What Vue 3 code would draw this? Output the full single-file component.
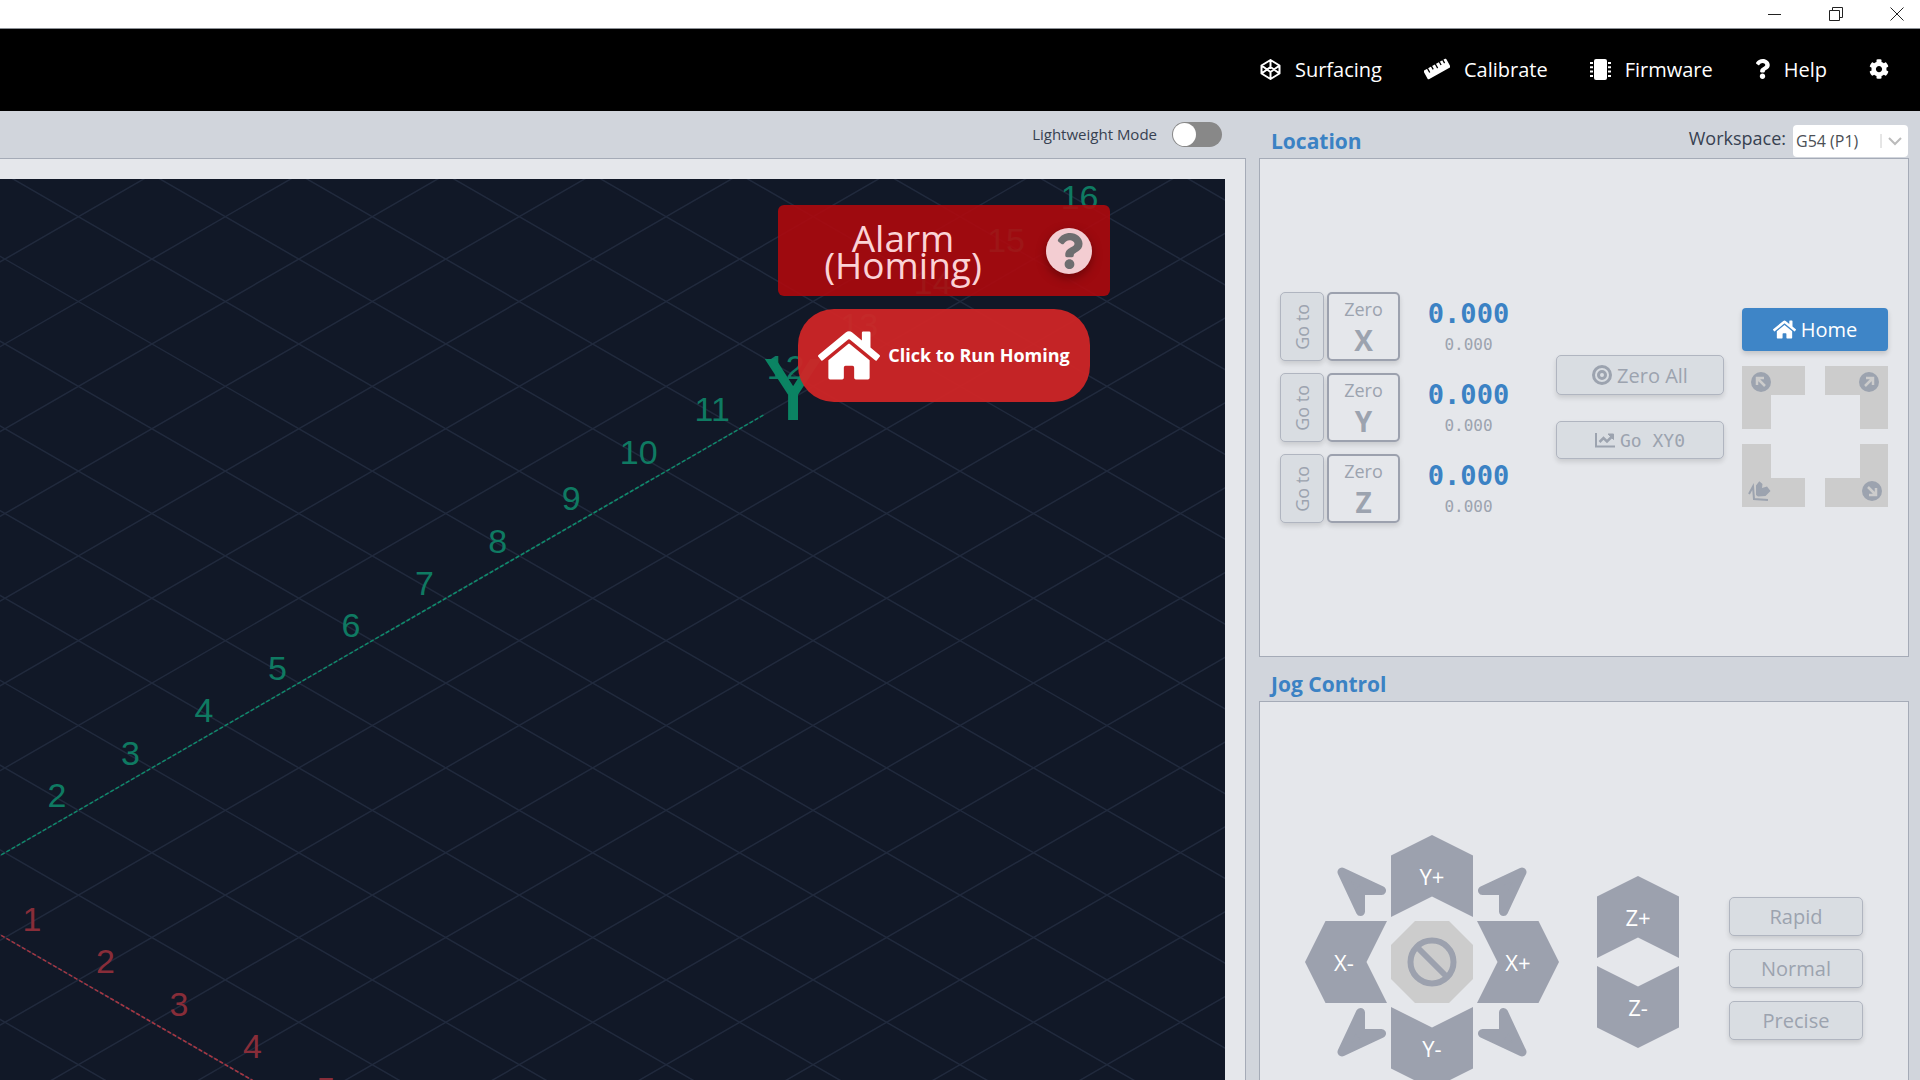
<script setup>
import { ref } from 'vue'

const lightweight = ref(false)
const workspace = ref('G54 (P1)')
const workspaces = ['G54 (P1)', 'G55 (P2)', 'G56 (P3)', 'G57 (P4)', 'G58 (P5)', 'G59 (P6)']

const axes = [
  { name: 'X', work: '0.000', machine: '0.000' },
  { name: 'Y', work: '0.000', machine: '0.000' },
  { name: 'Z', work: '0.000', machine: '0.000' },
]
const speeds = ['Rapid', 'Normal', 'Precise']

// Isometric grid: one unit along an axis moves STEP_X across and STEP_Y up or down
const STEP_X = 73.47
const STEP_Y = 42.4
const ORIGIN = { x: 78.4, y: 37.7 }
const TOP = -40
const BOTTOM = 2200

const gridLines = []
for (let k = -32; k <= 45; k++) {
  const x = ORIGIN.x + k * 2 * STEP_X
  for (const dir of [1, -1]) {
    const at = (y) => x + (dir * (y - ORIGIN.y) * STEP_X) / STEP_Y
    gridLines.push({ x1: at(TOP), y1: TOP, x2: at(BOTTOM), y2: BOTTOM })
  }
}

const yLabels = Array.from({ length: 15 }, (_, i) => {
  const n = i + 2
  const wide = n > 9
  return { n, x: 57 + i * STEP_X - (wide ? 6 : 0), y: 628 - i * STEP_Y - (wide ? 4 : 0) }
})
const xLabels = Array.from({ length: 5 }, (_, i) => ({
  n: i + 1,
  x: 32 + i * STEP_X,
  y: 752 + i * STEP_Y,
}))

const homePath =
  'M280.37 148.26L96 300.11V464a16 16 0 0 0 16 16l112.06-.29a16 16 0 0 0 15.92-16V368a16 16 0 0 1 16-16h64a16 16 0 0 1 16 16v95.64a16 16 0 0 0 16 16.05L464 480a16 16 0 0 0 16-16V300L295.67 148.26a12.19 12.19 0 0 0-15.3 0zM571.6 251.47L488 182.56V44.05a12 12 0 0 0-12-12h-56a12 12 0 0 0-12 12v72.61L318.47 43a48 48 0 0 0-61 0L4.34 251.47a12 12 0 0 0-1.6 16.9l25.5 31A12 12 0 0 0 45.15 301l235.22-193.74a12.19 12.19 0 0 1 15.3 0L530.9 301a12 12 0 0 0 16.9-1.6l25.5-31a12 12 0 0 0-1.7-16.93z'
const questionPath =
  'M202.021 0C122.202 0 70.503 32.703 29.914 91.026c-7.363 10.58-5.093 25.086 5.178 32.874l43.138 32.709c10.373 7.865 25.132 6.026 33.253-4.148 25.049-31.381 43.63-49.449 82.757-49.449 30.764 0 68.816 19.799 68.816 49.631 0 22.552-18.617 34.134-48.993 51.164-35.423 19.86-82.299 44.576-82.299 106.405V320c0 13.255 10.745 24 24 24h72.471c13.255 0 24-10.745 24-24v-5.773c0-42.86 125.268-44.645 125.268-160.627C377.504 66.256 286.902 0 202.021 0zM192 373.459c-38.196 0-69.271 31.075-69.271 69.271 0 38.195 31.075 69.27 69.271 69.27s69.271-31.075 69.271-69.271-31.075-69.27-69.271-69.27z'
const cogPath =
  'M487.4 315.7l-42.6-24.6c4.3-23.2 4.3-47 0-70.2l42.6-24.6c4.9-2.8 7.1-8.6 5.5-14-11.1-35.6-30-67.8-54.7-94.6-3.8-4.1-10-5.1-14.8-2.3L380.8 110c-17.9-15.4-38.5-27.3-60.8-35.1V25.8c0-5.6-3.9-10.5-9.4-11.7-36.7-8.2-74.3-7.8-109.2 0-5.5 1.2-9.4 6.1-9.4 11.7V75c-22.2 7.9-42.8 19.8-60.8 35.1L88.7 85.5c-4.9-2.8-11-1.9-14.8 2.3-24.7 26.7-43.6 58.9-54.7 94.6-1.7 5.4.6 11.2 5.5 14L67.3 221c-4.3 23.2-4.3 47 0 70.2l-42.6 24.6c-4.9 2.8-7.1 8.6-5.5 14 11.1 35.6 30 67.8 54.7 94.6 3.8 4.1 10 5.1 14.8 2.3l42.6-24.6c17.9 15.4 38.5 27.3 60.8 35.1v49.2c0 5.6 3.9 10.5 9.4 11.7 36.7 8.2 74.3 7.8 109.2 0 5.5-1.2 9.4-6.1 9.4-11.7v-49.2c22.2-7.9 42.8-19.8 60.8-35.1l42.6 24.6c4.9 2.8 11 1.9 14.8-2.3 24.7-26.7 43.6-58.9 54.7-94.6 1.5-5.5-.7-11.3-5.6-14.1zM256 336c-44.1 0-80-35.9-80-80s35.9-80 80-80 80 35.9 80 80-35.9 80-80 80z'
</script>

<template>
  <div class="app">
    <div class="titlebar">
      <button class="win-btn" type="button" aria-label="Minimize">
        <svg width="14" height="14" viewBox="0 0 14 14"><path d="M0 7.5h13" /></svg>
      </button>
      <button class="win-btn" type="button" aria-label="Restore">
        <svg width="14" height="14" viewBox="0 0 14 14"><path d="M.5 3.5h10v10h-10zM3.5 3.5v-3h10v10h-3" /></svg>
      </button>
      <button class="win-btn" type="button" aria-label="Close">
        <svg width="14" height="14" viewBox="0 0 14 14"><path d="M.5 .5l13 13M13.5 .5l-13 13" /></svg>
      </button>
    </div>

    <header class="topbar">
      <nav class="menu">
        <a class="menu-item" href="#surfacing">
          <svg width="21" height="21" viewBox="0 0 21 21" fill="none" stroke="#fff" stroke-width="2" stroke-linejoin="round">
            <path d="M10.500 1L19.500 6.500v8L10.500 20 1.500 14.500v-8zM1.500 6.500l9 6.500 9-6.500M1.500 14.500l9-6.500 9 6.500M10.500 1v7M10.500 13v7" />
          </svg>
          <span>Surfacing</span>
        </a>
        <a class="menu-item" href="#calibrate">
          <svg width="26" height="22" viewBox="0 0 26 22">
            <g transform="rotate(-29 13 11)">
              <rect x="0" y="6" width="26" height="10" rx="1" fill="#fff" />
              <path d="M5 5.500v5M9.500 5.500v4M14 5.500v5M18.500 5.500v4M22.500 5.500v4" stroke="#000" stroke-width="1.300" />
            </g>
          </svg>
          <span>Calibrate</span>
        </a>
        <a class="menu-item" href="#firmware">
          <svg width="21" height="21" viewBox="0 0 21 21">
            <rect x="4" y="0" width="13" height="21" rx="2" fill="#fff" />
            <path d="M0 4h3M0 8.300h3M0 12.600h3M0 17h3M18 4h3M18 8.300h3M18 12.600h3M18 17h3" stroke="#fff" stroke-width="2" />
          </svg>
          <span>Firmware</span>
        </a>
        <a class="menu-item" href="#help">
          <svg width="15" height="20" viewBox="0 0 384 512" fill="#fff"><path :d="questionPath" /></svg>
          <span>Help</span>
        </a>
        <a class="menu-item" href="#settings" aria-label="Settings">
          <svg width="20" height="20" viewBox="0 0 512 512" fill="#fff"><path :d="cogPath" /></svg>
        </a>
      </nav>
    </header>

    <main class="workspace">
      <section class="column">
        <div class="bar">
          <label class="switch">
            <span>Lightweight Mode</span>
            <input v-model="lightweight" type="checkbox" role="switch" />
          </label>
        </div>
        <div class="visualizer">
          <div class="canvas">
            <svg class="scene" width="100%" height="100%" aria-label="Toolpath view">
              <g class="grid">
                <line v-for="(l, i) in gridLines" :key="i" :x1="l.x1" :y1="l.y1" :x2="l.x2" :y2="l.y2" />
              </g>
              <line class="axis axis-y" x1="-30" y1="693.900" x2="765" y2="235.100" />
              <line class="axis axis-x" x1="-30" y1="738.300" x2="725" y2="1174" />
              <text v-for="l in yLabels" :key="'y' + l.n" class="tick tick-y" :x="l.x" :y="l.y">{{ l.n }}</text>
              <text v-for="l in xLabels" :key="'x' + l.n" class="tick tick-x" :x="l.x" :y="l.y">{{ l.n }}</text>
              <text class="axis-name" x="793" y="240">Y</text>
            </svg>
            <div class="alerts">
              <div class="alarm">
                <strong class="alarm-text">Alarm<br />(Homing)</strong>
                <button class="alarm-help" type="button" aria-label="Alarm help">
                  <svg width="27" height="36" viewBox="0 0 384 512" fill="#6e6e70"><path :d="questionPath" /></svg>
                </button>
              </div>
              <button class="run-homing" type="button">
                <svg width="62" height="55" viewBox="0 0 576 512" fill="#fff"><path :d="homePath" /></svg>
                <span>Click to Run Homing</span>
              </button>
            </div>
          </div>
        </div>
      </section>

      <section class="column">
        <div class="bar bar-location">
          <h2 class="title">Location</h2>
          <div class="picker">
            <label for="workspace">Workspace:</label>
            <span class="select-box">
              <select id="workspace" v-model="workspace">
                <option v-for="w in workspaces" :key="w">{{ w }}</option>
              </select>
              <svg class="caret" width="28" height="16" viewBox="0 0 28 16" fill="none">
                <path d="M1 1v14" stroke="#ccc" />
                <path d="M9 5l6 6 6-6" stroke="#bbb" stroke-width="2" />
              </svg>
            </span>
          </div>
        </div>
        <div class="panel location">
          <div class="axes">
            <div v-for="a in axes" :key="a.name" class="axis-row">
              <button class="goto" type="button"><span>Go to</span></button>
              <button class="zero" type="button">
                <span>Zero</span>
                <b>{{ a.name }}</b>
              </button>
              <div class="readout">
                <output class="work">{{ a.work }}</output>
                <output class="machine">{{ a.machine }}</output>
              </div>
            </div>
          </div>
          <div class="actions">
            <button class="soft" type="button">
              <svg width="20" height="20" viewBox="0 0 20 20" fill="none" stroke="#9ca3af" stroke-width="3">
                <circle cx="10" cy="10" r="8.500" />
                <circle cx="10" cy="10" r="3.500" />
              </svg>
              <span>Zero All</span>
            </button>
            <button class="soft soft-mono" type="button">
              <svg width="20" height="16" viewBox="0 0 20 16" fill="none" stroke="#9ca3af" stroke-width="2">
                <path d="M1 1v13.500h19" />
                <path d="M4.500 10l4-4 3.500 3.500 5-5" stroke-width="2.500" />
                <path d="M13 2h5.500v5.500z" fill="#9ca3af" stroke-width="1" />
              </svg>
              <span>Go XY0</span>
            </button>
          </div>
          <div class="homing">
            <button class="home" type="button">
              <svg width="23" height="21" viewBox="0 0 576 512" fill="#fff"><path :d="homePath" /></svg>
              <span>Home</span>
            </button>
            <div class="corners">
              <button class="corner tl" type="button" aria-label="Go to back left">
                <svg width="20" height="20" viewBox="0 0 20 20">
                  <circle cx="10" cy="10" r="10" fill="#9ca3af" />
                  <path d="M6 13V6h7M6.500 6.500l7.500 7.500" fill="none" stroke="#ccc" stroke-width="2.500" />
                </svg>
              </button>
              <button class="corner tr" type="button" aria-label="Go to back right">
                <svg width="20" height="20" viewBox="0 0 20 20">
                  <circle cx="10" cy="10" r="10" fill="#9ca3af" />
                  <path d="M7 6h7v7M13.500 6.500L6 14" fill="none" stroke="#ccc" stroke-width="2.500" />
                </svg>
              </button>
              <button class="corner bl" type="button" aria-label="Go to front left">
                <svg width="23" height="20" viewBox="0 0 23 20" fill="#9ca3af">
                  <path d="M1 13L5 5.500l1 12.500 14 1" fill="none" stroke="#9ca3af" stroke-width="2" />
                  <path d="M8 4.500L11.300.300l3.200 2.700-.500 4L19 5.500l3.500 4.500-5 5-7.500.500-2-1.500z" />
                </svg>
              </button>
              <button class="corner br" type="button" aria-label="Go to front right">
                <svg width="20" height="20" viewBox="0 0 20 20">
                  <circle cx="10" cy="10" r="10" fill="#9ca3af" />
                  <path d="M14 7v7H7M13.500 13.500L6 6" fill="none" stroke="#ccc" stroke-width="2.500" />
                </svg>
              </button>
            </div>
          </div>
        </div>

        <div class="bar bar-jog">
          <h2 class="title">Jog Control</h2>
        </div>
        <div class="panel jog">
          <div class="pad">
            <button class="diag nw" type="button" aria-label="X- Y+">
              <svg width="50" height="50" viewBox="0 0 50 50"><path d="M5 5l39.500 18.500h-21v21z" /></svg>
            </button>
            <button class="jog-btn up" type="button">Y+</button>
            <button class="diag ne" type="button" aria-label="X+ Y+">
              <svg width="50" height="50" viewBox="0 0 50 50"><path d="M45 5L5.500 23.500h21v21z" /></svg>
            </button>
            <button class="jog-btn left" type="button">X-</button>
            <button class="stop" type="button" aria-label="Stop jog">
              <svg width="50" height="50" viewBox="0 0 50 50" fill="none" stroke="#9ca1ae" stroke-width="6">
                <circle cx="25" cy="25" r="21.500" />
                <path d="M10 10l30 30" />
              </svg>
            </button>
            <button class="jog-btn right" type="button">X+</button>
            <button class="diag sw" type="button" aria-label="X- Y-">
              <svg width="50" height="50" viewBox="0 0 50 50"><path d="M5 45l39.500-18.500h-21v-21z" /></svg>
            </button>
            <button class="jog-btn down" type="button">Y-</button>
            <button class="diag se" type="button" aria-label="X+ Y-">
              <svg width="50" height="50" viewBox="0 0 50 50"><path d="M45 45L5.500 26.500h21v-21z" /></svg>
            </button>
          </div>
          <div class="z-pad">
            <button class="jog-btn up" type="button">Z+</button>
            <button class="jog-btn down" type="button">Z-</button>
          </div>
          <div class="speeds">
            <button v-for="s in speeds" :key="s" class="soft" type="button">{{ s }}</button>
          </div>
        </div>
      </section>
    </main>
  </div>
</template>

<style>
body {
  margin: 0;
  background: #d1d5dc;
}
</style>

<style scoped>
.app {
  display: flex;
  flex-direction: column;
  height: 100vh;
  overflow: hidden;
  font-family: 'Open Sans', 'Noto Sans', sans-serif;
  color: #374151;
  background: #d1d5dc;
}
.app *,
.app {
  box-sizing: border-box;
}
button {
  margin: 0;
  padding: 0;
  border: 0;
  background: none;
  font: inherit;
  color: inherit;
  cursor: pointer;
}
svg {
  display: block;
  flex: none;
}

.titlebar {
  flex: none;
  display: flex;
  justify-content: flex-end;
  align-items: center;
  height: 29px;
  padding-right: 16px;
  gap: 47px;
  background: #fff;
  border-bottom: 1px solid #8c9096;
}
.win-btn svg {
  fill: none;
  stroke: #222;
}

.topbar {
  flex: none;
  display: flex;
  justify-content: flex-end;
  height: 82px;
  padding: 0 31px 2px 0;
  background: #000;
}
.menu {
  display: flex;
  align-items: center;
  gap: 42px;
}
.menu-item {
  display: flex;
  align-items: center;
  gap: 14px;
  color: #fff;
  font-size: 20px;
  text-decoration: none;
}

.workspace {
  flex: 1;
  min-height: 0;
  display: grid;
  grid-template-columns: minmax(0, 1246fr) minmax(0, 650fr);
  gap: 13px;
  padding-right: 11px;
}
.column {
  display: flex;
  flex-direction: column;
  min-height: 0;
}
.bar {
  flex: none;
  display: flex;
  align-items: center;
  justify-content: flex-end;
  height: 47px;
  padding-right: 24px;
}
.bar-location {
  justify-content: space-between;
  align-items: flex-end;
  padding: 0 1px 0 12px;
}
.bar-jog {
  justify-content: flex-start;
  align-items: flex-end;
  height: 44px;
  padding-left: 12px;
}
.title {
  margin: 0 0 3px;
  font-size: 21px;
  line-height: 28px;
  font-weight: 700;
  color: #3b82c4;
}

.switch {
  display: flex;
  align-items: center;
  gap: 15px;
  padding-bottom: 1px;
  font-size: 15px;
}
.switch input {
  appearance: none;
  display: flex;
  width: 50px;
  height: 25px;
  margin: 0;
  padding: 1px;
  border-radius: 13px;
  background: #888;
}
.switch input::before {
  content: '';
  width: 23px;
  height: 23px;
  border-radius: 50%;
  background: #fff;
}
.switch input:checked {
  justify-content: flex-end;
  background: #3e85c7;
}

.visualizer {
  flex: 1;
  min-height: 0;
  display: flex;
  padding: 20px 20px 0 0;
  background: #e5e7eb;
  border: 1px solid #a5abb7;
  border-width: 1px 1px 0 0;
}
.canvas {
  position: relative;
  flex: 1;
  min-width: 0;
  background: #111827;
  overflow: hidden;
}
.scene {
  position: absolute;
  inset: 0;
}
.grid line {
  stroke: #212a3d;
  stroke-width: 1.5;
}
.axis {
  stroke-width: 1.5;
  stroke-dasharray: 4 2;
}
.axis-y {
  stroke: #0e8a6b;
}
.axis-x {
  stroke: #a53642;
}
.tick {
  font-family: 'Liberation Sans', Arial, sans-serif;
  font-size: 34px;
  text-anchor: middle;
}
.tick-y {
  fill: #0f7a62;
}
.tick-x {
  fill: #882d39;
}
.axis-name {
  font-family: 'Liberation Sans', Arial, sans-serif;
  font-size: 85px;
  text-anchor: middle;
  fill: #0b8463;
  stroke: #0b8463;
  stroke-width: 2;
}

.alerts {
  position: absolute;
  top: 26px;
  right: 115px;
  display: flex;
  flex-direction: column;
  align-items: center;
  gap: 13px;
}
.alarm {
  display: flex;
  align-items: center;
  width: 332px;
  height: 91px;
  padding-right: 18px;
  border-radius: 6px;
  background: rgba(178, 8, 13, 0.88);
}
.alarm-text {
  flex: 1;
  font-size: 37px;
  line-height: 27px;
  font-weight: 400;
  text-align: center;
  color: #fbd3d6;
}
.alarm-help {
  display: flex;
  align-items: center;
  justify-content: center;
  width: 46px;
  height: 46px;
  margin-left: 18px;
  border-radius: 50%;
  background: #f3cdd2;
  box-shadow: 0 4px 10px rgba(60, 0, 0, 0.5);
}
.run-homing {
  display: flex;
  align-items: center;
  justify-content: center;
  gap: 8px;
  width: 292px;
  height: 93px;
  padding-bottom: 1px;
  border-radius: 36px;
  background: rgba(207, 37, 38, 0.95);
  color: #fff;
  font-size: 18px;
  font-weight: 700;
}

.picker {
  display: flex;
  align-items: flex-end;
  gap: 7px;
  padding-bottom: 1px;
  font-size: 18px;
}
.picker label {
  line-height: 38px;
}
.select-box {
  position: relative;
  width: 115px;
  height: 32px;
  border-radius: 4px;
  background: #fff;
}
.select-box select {
  appearance: none;
  width: 100%;
  height: 100%;
  margin: 0;
  padding: 0 30px 0 3px;
  border: 0;
  background: transparent;
  font: inherit;
  font-size: 16px;
  color: #4b4f55;
}
.caret {
  position: absolute;
  top: 8px;
  right: 0;
  pointer-events: none;
}

.panel {
  flex: none;
  display: flex;
  background: #e5e7eb;
  border: 1px solid #a5abb7;
}
.location {
  align-items: center;
  justify-content: space-between;
  min-height: 499px;
  padding: 0 20px;
}
.axes {
  display: flex;
  flex-direction: column;
  gap: 12px;
}
.axis-row {
  display: flex;
  align-items: stretch;
  gap: 3px;
  height: 69px;
}
.goto,
.zero,
.soft {
  border: 1px solid #b0b5c0;
  border-radius: 5px;
  background: #d9dde2;
  color: #9ca3af;
  box-shadow: 0 3px 5px rgba(0, 0, 0, 0.12);
}
.goto {
  display: flex;
  align-items: center;
  justify-content: center;
  width: 44px;
  font-size: 18px;
}
.goto span {
  writing-mode: vertical-rl;
  transform: rotate(180deg);
}
.zero {
  display: flex;
  flex-direction: column;
  align-items: center;
  justify-content: center;
  width: 73px;
  padding-bottom: 3px;
  border: 2px solid #9ca1ae;
  background: #e5e7eb;
  font-size: 18px;
  line-height: 30px;
}
.zero b {
  font-size: 28px;
  line-height: 32px;
}
.readout {
  display: flex;
  flex-direction: column;
  align-items: center;
  justify-content: center;
  gap: 4px;
  width: 135px;
  padding: 2px 4px 0 0;
  font-family: 'DejaVu Sans Mono', monospace;
}
.work {
  font-size: 27px;
  line-height: 30px;
  font-weight: 700;
  color: #3b82c4;
}
.machine {
  font-size: 16px;
  line-height: 24px;
  color: #9ca3af;
}
.actions {
  display: flex;
  flex-direction: column;
  gap: 26px;
  padding-bottom: 1px;
}
.soft {
  display: flex;
  align-items: center;
  justify-content: center;
  gap: 5px;
  width: 168px;
  height: 40px;
  font-size: 20px;
}
.soft-mono {
  height: 38px;
  font-family: 'DejaVu Sans Mono', monospace;
  font-size: 18px;
}
.homing {
  display: flex;
  flex-direction: column;
  gap: 15px;
}
.home {
  display: flex;
  align-items: center;
  justify-content: center;
  gap: 5px;
  width: 146px;
  height: 43px;
  border-radius: 4px;
  background: #3e85c7;
  color: #fff;
  font-size: 20px;
  box-shadow: 0 3px 5px rgba(0, 0, 0, 0.15);
}
.corners {
  display: grid;
  grid-template-columns: 63px 63px;
  grid-auto-rows: 63px;
  gap: 15px 20px;
}
.corner {
  display: flex;
  padding: 6px 9px;
  background: #ccc;
}
.tl {
  clip-path: polygon(0 0, 100% 0, 100% 29px, 29px 29px, 29px 100%, 0 100%);
}
.tr {
  justify-content: flex-end;
  clip-path: polygon(0 0, 100% 0, 100% 100%, 35px 100%, 35px 29px, 0 29px);
}
.bl {
  align-items: flex-end;
  padding-left: 6px;
  clip-path: polygon(0 0, 29px 0, 29px 34px, 100% 34px, 100% 100%, 0 100%);
}
.br {
  align-items: flex-end;
  justify-content: flex-end;
  padding-right: 6px;
  clip-path: polygon(35px 0, 100% 0, 100% 100%, 0 100%, 0 34px, 35px 34px);
}

.jog {
  align-items: center;
  min-height: 522px;
  padding: 0 45px;
}
.pad {
  display: grid;
  grid-template-columns: repeat(3, 82px);
  grid-auto-rows: 82px;
  gap: 4px;
}
.jog-btn {
  width: 82px;
  height: 82px;
  background: #9ca1ae;
  color: #fff;
  font-size: 22px;
}
.up {
  clip-path: polygon(50% 0, 100% 25%, 100% 100%, 50% 75%, 0 100%, 0 25%);
}
.down {
  clip-path: polygon(0 0, 50% 25%, 100% 0, 100% 75%, 50% 100%, 0 75%);
}
.left {
  padding-right: 4px;
  clip-path: polygon(25% 0, 100% 0, 75% 50%, 100% 100%, 25% 100%, 0 50%);
}
.right {
  clip-path: polygon(0 0, 75% 0, 100% 50%, 75% 100%, 0 100%, 25% 50%);
}
.stop {
  display: flex;
  align-items: center;
  justify-content: center;
  background: #ccc;
  clip-path: polygon(24px 0, 58px 0, 100% 24px, 100% 58px, 58px 100%, 24px 100%, 0 58px, 0 24px);
}
.diag {
  display: flex;
}
.diag path {
  fill: #9ca1ae;
  stroke: #9ca1ae;
  stroke-width: 9;
  stroke-linejoin: round;
}
.nw {
  align-items: flex-end;
  justify-content: flex-end;
}
.ne {
  align-items: flex-end;
}
.sw {
  justify-content: flex-end;
}
.z-pad {
  display: flex;
  flex-direction: column;
  gap: 8px;
  margin: 0 auto 0 38px;
}
.speeds {
  display: flex;
  flex-direction: column;
  gap: 13px;
  padding-top: 12px;
}
.speeds .soft {
  width: 134px;
  height: 39px;
}
</style>
